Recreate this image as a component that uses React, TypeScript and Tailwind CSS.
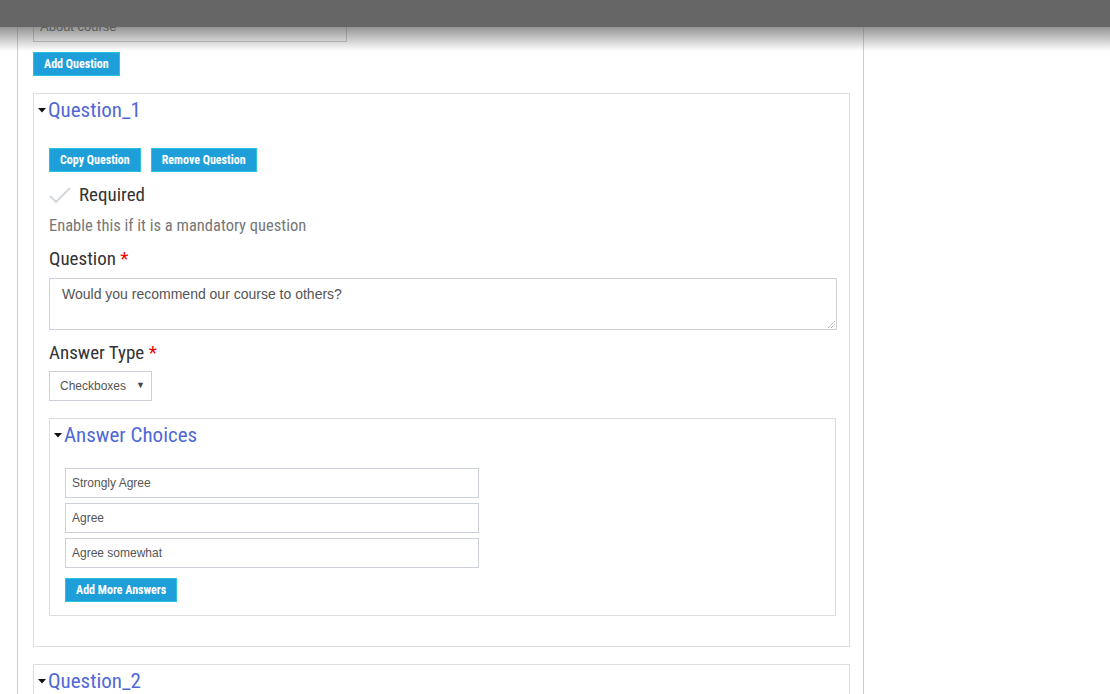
import React from "react";

const cond = "font-['Roboto_Condensed','Liberation_Sans_Narrow','DejaVu_Sans_Condensed',sans-serif]";

function Caret() {
  return (
    <svg width="8" height="5" viewBox="0 0 8 5" className="shrink-0">
      <polygon points="0,0 8,0 4,4.5" fill="#111" />
    </svg>
  );
}

function Btn({ children }: { children: React.ReactNode }) {
  return (
    <button
      className={`block h-[24px] px-[10px] bg-[#1f9fda] border border-[#27c3e3] text-white text-[12px] font-bold leading-none ${cond}`}
    >
      {children}
    </button>
  );
}

function ChoiceInput({ value }: { value: string }) {
  return (
    <div className="h-[30px] w-[414px] border border-[#ccd0d8] flex items-center px-[6px] text-[12px] text-[#555] font-['Liberation_Sans',Arial,sans-serif]">
      {value}
    </div>
  );
}

function Heading({ children }: { children: React.ReactNode }) {
  return (
    <div className={`-ml-[11px] flex items-center gap-[2px] pt-[4px] h-[29px] text-[21px] text-[#5069d6] ${cond}`}>
      <Caret />
      <span>{children}</span>
    </div>
  );
}

export default function App() {
  return (
    <div className="relative w-full h-[694px] overflow-hidden bg-white">
      <div className="ml-[17px] w-[847px] h-full border-l border-r border-[#cccccc] pl-[15px] pr-[13px] pt-[12px]">
        <div className="h-[30px] w-[314px] border border-[#c8c8c8] flex items-center px-[6px] text-[13px] text-[#444] font-['Liberation_Sans',Arial,sans-serif]">
          About course
        </div>
        <div className="mt-[10px] flex">
          <Btn>Add Question</Btn>
        </div>

        <div className="mt-[17px] border border-[#dddddd] pl-[15px] pr-[12px] pb-[30px]">
          <Heading>Question_1</Heading>
          <div className="mt-[25px] flex gap-[10px]">
            <Btn>Copy Question</Btn>
            <Btn>Remove Question</Btn>
          </div>
          <div className={`mt-[12px] flex items-center h-[22px] ${cond}`}>
            <svg width="22" height="16" viewBox="0 0 22 16" className="shrink-0">
              <polyline points="1,9 7,15 21,1" fill="none" stroke="#d5d8de" strokeWidth="2" />
            </svg>
            <span className="ml-[8px] text-[19px] text-[#333]">Required</span>
          </div>
          <div className={`mt-[10px] text-[16.5px] leading-[20px] text-[#777] ${cond}`}>
            Enable this if it is a mandatory question
          </div>
          <div className={`mt-[12px] text-[19px] leading-[22px] text-[#333] ${cond}`}>
            Question <span className="text-[#e00]">*</span>
          </div>
          <div className="mt-[8px] h-[52px] border border-[#ccd0d8] px-[12px] pt-[5px] text-[14px] text-[#555] font-['Liberation_Sans',Arial,sans-serif] relative">
            Would you recommend our course to others?
            <svg width="8" height="8" viewBox="0 0 8 8" className="absolute right-[1px] bottom-[1px]">
              <line x1="1" y1="8" x2="8" y2="1" stroke="#666" strokeWidth="0.8" strokeDasharray="1 1" />
              <line x1="4" y1="8" x2="8" y2="4" stroke="#666" strokeWidth="0.8" strokeDasharray="1 1" />
            </svg>
          </div>
          <div className={`mt-[12px] text-[19px] leading-[22px] text-[#333] ${cond}`}>
            Answer Type <span className="text-[#e00]">*</span>
          </div>
          <div className="mt-[7px] h-[30px] w-[103px] border border-[#ccd0d8] flex items-center justify-between pl-[10px] pr-[6px] text-[12px] text-[#555] font-['Liberation_Sans',Arial,sans-serif]">
            <span>Checkboxes</span>
            <span className="text-[9px] text-[#444]">▼</span>
          </div>

          <div className="mt-[17px] w-[787px] border border-[#dddddd] pl-[15px] pb-[13px]">
            <Heading>Answer Choices</Heading>
            <div className="mt-[20px] flex flex-col gap-[5px]">
              <ChoiceInput value="Strongly Agree" />
              <ChoiceInput value="Agree" />
              <ChoiceInput value="Agree somewhat" />
            </div>
            <div className="mt-[10px] flex">
              <Btn>Add More Answers</Btn>
            </div>
          </div>
        </div>

        <div className="mt-[17px] border border-[#dddddd] pl-[15px] pr-[12px] h-[60px]">
          <Heading>Question_2</Heading>
        </div>
      </div>

      <div className="absolute top-0 left-0 right-0">
        <div className="h-[27px] bg-[#666666]" />
        <div className="h-[24px] bg-gradient-to-b from-[rgba(102,102,102,0.7)] to-[rgba(255,255,255,0)]" />
      </div>
    </div>
  );
}
